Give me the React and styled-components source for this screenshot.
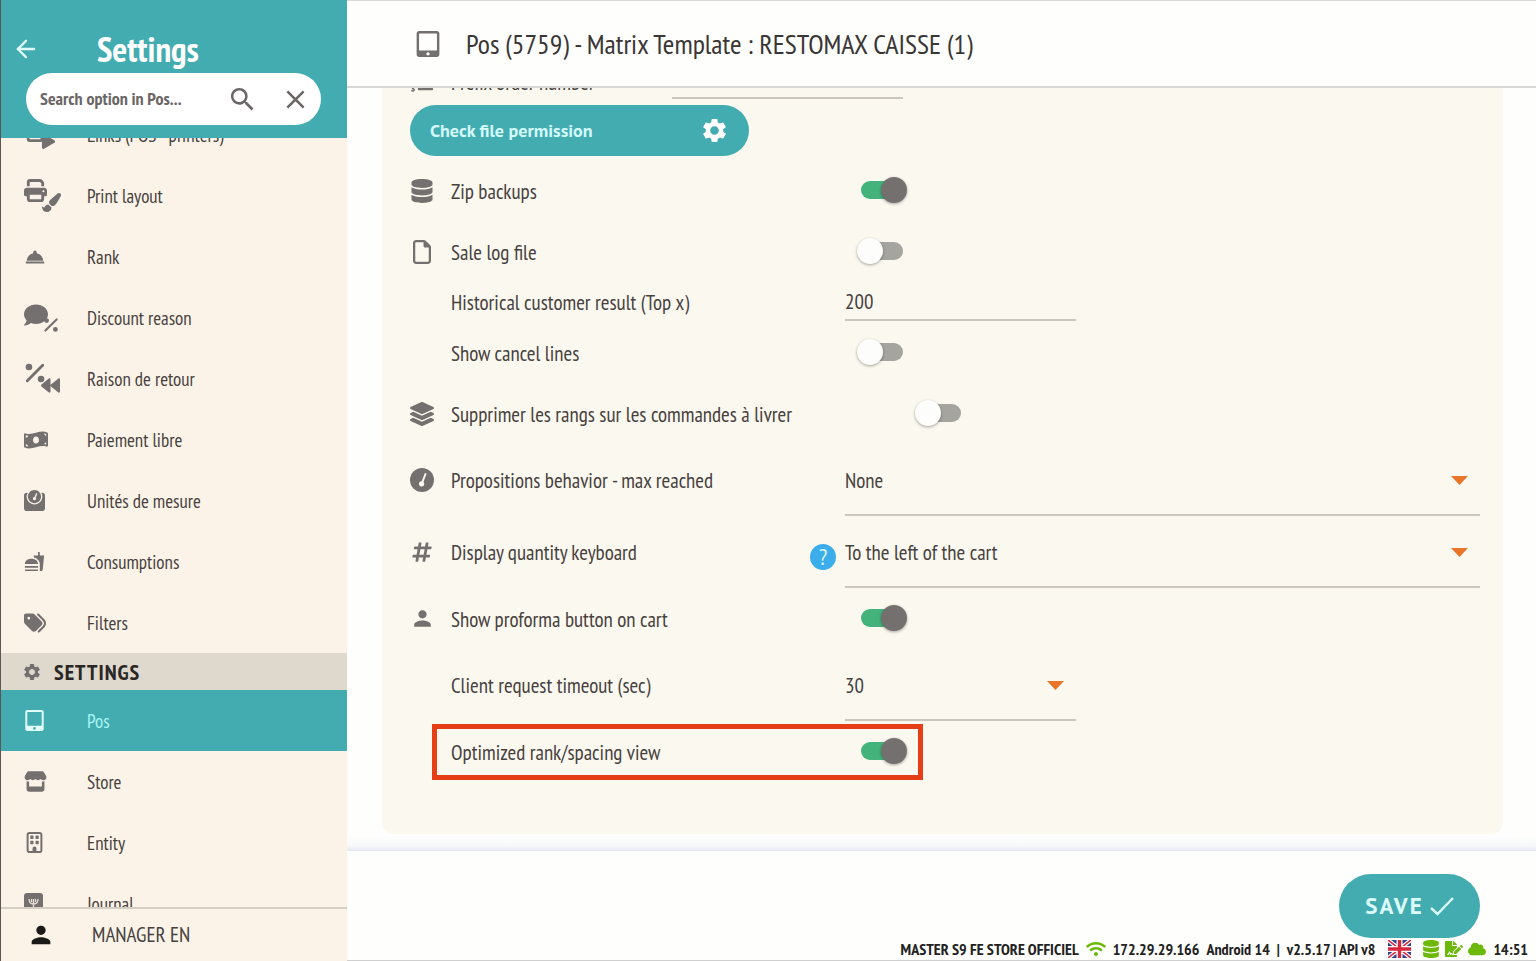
import styled, { createGlobalStyle, css } from 'styled-components'
import { FiArrowLeft } from 'react-icons/fi'
import { MdSearch, MdClose, MdRoomService, MdFastfood, MdSettings, MdPerson } from 'react-icons/md'
import {
	FaBackward,
	FaCloud,
	FaComment,
	FaDatabase,
	FaFileSignature,
	FaHashtag,
	FaLayerGroup,
	FaListOl,
	FaMoneyBillWave,
	FaPaintBrush,
	FaPlay,
	FaTabletAlt,
	FaWeight,
	FaWifi,
} from 'react-icons/fa'
import { FaPrint, FaRegBuilding, FaRegFile, FaStore, FaTags } from 'react-icons/fa6'

const teal = '#43acb0'
const grey = '#757070'
const wideFont = "'PT Sans', 'Open Sans', 'Liberation Sans', sans-serif"

const GlobalStyle = createGlobalStyle`
	*, *::before, *::after {
		box-sizing: border-box;
	}
	body {
		margin: 0;
		background: #fefefd;
		color: #48423f;
		font-family: 'PT Sans Narrow', 'Liberation Sans Narrow', 'Liberation Sans', sans-serif;
		font-size: 21px;
		line-height: 24px;
	}
	button, input, select {
		font: inherit;
		color: inherit;
		border: 0;
		padding: 0;
		margin: 0;
		background: none;
		border-radius: 0;
	}
	button {
		cursor: pointer;
	}
	svg {
		display: block;
		flex: none;
	}
`

const Shell = styled.div`
	display: flex;
	height: 100vh;
	overflow: hidden;
`

/* sidebar */
const Sidebar = styled.aside`
	display: flex;
	flex-direction: column;
	flex: 0 0 347px;
	background: #fbf3e8;
	border-left: 1px solid #5d5753;
`
const SidebarHead = styled.header`
	height: 138px;
	flex: none;
	padding: 31px 26px 0 11px;
	background: ${teal};
	color: #fff;
`
const TitleRow = styled.div`
	display: flex;
	align-items: center;
	gap: 57px;
	height: 36px;
	button {
		color: #dffafa;
	}
	h1 {
		margin: 0;
		font-size: 35px;
		line-height: 36px;
		font-weight: 700;
	}
`
const SearchBox = styled.form`
	display: flex;
	align-items: center;
	height: 52px;
	margin: 6px 0 0 14px;
	padding: 0 10px 0 14px;
	border-radius: 26px;
	background: #fff;
	color: #6b6666;
	input {
		flex: 1;
		min-width: 0;
		font-size: 18px;
		font-weight: 700;
		outline: 0;
	}
	input::placeholder {
		color: #6b6666;
		opacity: 1;
	}
	button + button {
		margin-left: 22px;
	}
`
const Nav = styled.nav`
	flex: 1;
	min-height: 0;
	overflow: hidden;
	ul {
		list-style: none;
		margin: -34px 0 0;
		padding: 0;
	}
`
const NavLink = styled.a`
	display: grid;
	grid-template-columns: 63px 1fr;
	align-items: center;
	height: 61px;
	padding-left: 23px;
	color: #48423f;
	text-decoration: none;
	font-size: 19px;
	svg {
		color: ${grey};
	}
	${({ $active }) =>
		$active &&
		css`
			background: ${teal};
			color: #a5f6f6;
			svg {
				color: #e2fdfd;
			}
		`}
`
const NavSection = styled.h2`
	display: flex;
	align-items: center;
	gap: 12px;
	height: 37px;
	margin: 0;
	padding-left: 21px;
	background: #dfd8cd;
	color: #2a2725;
	font-size: 22px;
	letter-spacing: 1px;
	svg {
		color: ${grey};
	}
`
const IconPair = styled.span`
	display: flex;
	width: 40px;
	svg + svg {
		margin: 14px 0 0 -5px;
	}
`
const UserRow = styled.div`
	display: flex;
	align-items: center;
	gap: 37px;
	flex: none;
	height: 54px;
	padding-left: 26px;
	border-top: 2px solid #d5cec4;
	svg {
		color: #1c1a19;
	}
`

/* main column */
const Main = styled.main`
	display: flex;
	flex-direction: column;
	flex: 1;
	min-width: 0;
	border-top: 1px solid #d9d9d9;
`
const PageHead = styled.header`
	display: flex;
	align-items: center;
	gap: 25px;
	flex: none;
	height: 87px;
	padding-left: 68px;
	border-bottom: 2px solid #d8d8d6;
	svg {
		color: ${grey};
	}
	h2 {
		margin: 0;
		color: #3a3636;
		font-size: 28px;
		line-height: 32px;
		font-weight: 400;
	}
`
const Scroller = styled.div`
	flex: 1;
	min-height: 0;
	overflow: hidden;
	padding: 0 33px 0 35px;
	background: linear-gradient(to top, #e6e8ee 0, #f6f8fb 5px, #fefefd 16px);
`
const Panel = styled.section`
	margin-top: -28px;
	padding: 0 23px 52px 28px;
	border-radius: 12px;
	background: #fbf8ef;
`
const Row = styled.div`
	position: relative;
	display: grid;
	grid-template-columns: 24px ${({ $label }) => $label || 394}px 1fr;
	column-gap: 17px;
	align-items: center;
	height: ${({ $height }) => $height || 61}px;
	> svg {
		justify-self: center;
		color: ${grey};
	}
	label {
		grid-column: 2;
		margin-right: -17px;
		padding-top: 2px;
	}
	${({ $marked }) =>
		$marked &&
		css`
			&::after {
				content: '';
				position: absolute;
				top: 3px;
				left: 22px;
				width: 491px;
				height: 56px;
				border: 5px solid #e63f17;
				pointer-events: none;
			}
		`}
`
const Control = styled.div`
	grid-column: 3;
	position: relative;
	display: flex;
	align-items: center;
	margin-left: -17px;
	height: 100%;
`
const TextField = styled.input`
	align-self: flex-start;
	width: 231px;
	height: 39px;
	padding-top: 2px;
	border-bottom: 2px solid #cbc7c0;
	outline: 0;
`
const SelectWrap = styled.div`
	position: relative;
	width: ${({ $width }) => $width || '100%'};
	select {
		display: block;
		width: 100%;
		height: 72px;
		padding-top: 4px;
		border-bottom: 2px solid #cbc7c0;
		appearance: none;
		outline: 0;
	}
	svg {
		position: absolute;
		top: 32px;
		right: 12px;
		pointer-events: none;
	}
`
const Toggle = styled.input.attrs({ type: 'checkbox' })`
	appearance: none;
	position: relative;
	width: 42px;
	height: 18px;
	margin: 0 0 2px ${({ $indent }) => $indent || 16}px;
	border-radius: 9px;
	background: #a5a49f;
	cursor: pointer;
	&::before {
		content: '';
		position: absolute;
		top: -4px;
		left: -4px;
		width: 26px;
		height: 26px;
		border-radius: 50%;
		background: #fdfefc;
		box-shadow: 0 1px 3px rgba(0, 0, 0, .35);
	}
	&:checked {
		background: #43b37b;
	}
	&:checked::before {
		left: 20px;
		background: ${grey};
	}
`
const Help = styled.button`
	position: absolute;
	top: 28px;
	left: -35px;
	width: 26px;
	height: 26px;
	border-radius: 50%;
	background: #3badea;
	color: #d9f5ff;
	font-size: 24px;
	line-height: 26px;
`
const PermissionButton = styled.button`
	display: flex;
	align-items: center;
	justify-content: space-between;
	width: 339px;
	height: 51px;
	margin: 1px 0 4px;
	padding: 0 20px;
	border-radius: 26px;
	background: ${teal};
	color: #d3fafa;
	font-family: ${wideFont};
	font-size: 18px;
	font-weight: 700;
	svg {
		color: #fff;
	}
`
const Footer = styled.footer`
	display: flex;
	flex-direction: column;
	justify-content: space-between;
	align-items: flex-end;
	flex: none;
	height: 110px;
	padding-top: 23px;
	border-bottom: 1px solid #cfcfcf;
`
const SaveButton = styled.button`
	display: flex;
	align-items: center;
	justify-content: center;
	gap: 6px;
	width: 141px;
	height: 64px;
	margin-right: 56px;
	border-radius: 32px;
	background: ${teal};
	color: #dcfbfb;
	font-family: ${wideFont};
	font-size: 23px;
	font-weight: 700;
	letter-spacing: 2px;
`
const StatusBar = styled.div`
	display: flex;
	align-items: center;
	gap: 7px;
	height: 22px;
	padding-right: 8px;
	color: #222;
	font-size: 16px;
	line-height: 20px;
	font-weight: 700;
	white-space: nowrap;
	svg {
		color: #6cb90c;
	}
`
const StatusIcons = styled.span`
	display: flex;
	align-items: center;
	gap: 5px;
	margin-left: 6px;
	svg:first-child {
		margin-right: 6px;
	}
`

const Percent = ({ size = 20 }) => (
	<svg width={size} height={size} viewBox="0 0 20 20" fill="currentColor" aria-hidden="true">
		<path d="M3 17 17 3" stroke="currentColor" strokeWidth="2.6" strokeLinecap="round" />
		<circle cx="4.5" cy="4.5" r="3" />
		<circle cx="15.5" cy="15.5" r="3" />
	</svg>
)

const Gauge = () => (
	<svg width="24" height="24" viewBox="0 0 24 24" fill="currentColor" aria-hidden="true">
		<circle cx="12" cy="12" r="12" />
		<path d="M15.5 6 12.4 14" stroke="#fbf8ef" strokeWidth="2" strokeLinecap="round" />
		<circle cx="11.6" cy="15.8" r="2.6" fill="#fbf8ef" />
	</svg>
)

const Journal = () => (
	<svg width="19" height="22" viewBox="0 0 19 22" aria-hidden="true">
		<rect width="19" height="22" rx="3" fill="currentColor" />
		<path d="M5 6c0 4 2 5 4.5 5S14 10 14 6M9.5 6v10M7.5 6v3M11.5 6v3" fill="none" stroke="#e8dfd6" strokeWidth="1.3" />
	</svg>
)

const Caret = () => (
	<svg width="17" height="9" viewBox="0 0 17 9" aria-hidden="true">
		<path d="M0 0h17L8.5 9z" fill="#e8752a" />
	</svg>
)

const Check = () => (
	<svg width="24" height="20" viewBox="0 0 24 20" fill="none" stroke="currentColor" strokeWidth="2.4" aria-hidden="true">
		<path d="M1 12l6.5 6L23 2" />
	</svg>
)

const Flag = () => (
	<svg width="23" height="18" viewBox="0 0 23 18" aria-hidden="true">
		<path fill="#34408a" d="M0 0h23v18H0z" />
		<path d="M0 0l23 18M23 0L0 18" stroke="#fff" strokeWidth="4" />
		<path d="M0 0l23 18M23 0L0 18" stroke="#d8283e" strokeWidth="1.5" />
		<path d="M11.5 0v18M0 9h23" stroke="#fff" strokeWidth="6" />
		<path d="M11.5 0v18M0 9h23" stroke="#d8283e" strokeWidth="3.4" />
	</svg>
)

const shopLinks = [
	{ text: 'Links (POS - printers)', icon: <IconPair><FaPrint size={22} /><FaPlay size={15} /></IconPair> },
	{ text: 'Print layout', icon: <IconPair><FaPrint size={23} /><FaPaintBrush size={19} /></IconPair> },
	{ text: 'Rank', icon: <MdRoomService size={22} /> },
	{ text: 'Discount reason', icon: <IconPair><FaComment size={24} /><Percent size={16} /></IconPair> },
	{ text: 'Raison de retour', icon: <IconPair><Percent size={22} /><FaBackward size={19} /></IconPair> },
	{ text: 'Paiement libre', icon: <FaMoneyBillWave size={24} /> },
	{ text: 'Unités de mesure', icon: <FaWeight size={21} /> },
	{ text: 'Consumptions', icon: <MdFastfood size={21} /> },
	{ text: 'Filters', icon: <FaTags size={22} /> },
]

const settingLinks = [
	{ text: 'Pos', icon: <FaTabletAlt size={21} />, active: true },
	{ text: 'Store', icon: <FaStore size={23} /> },
	{ text: 'Entity', icon: <FaRegBuilding size={21} /> },
	{ text: 'Journal', icon: <Journal /> },
]

const NavItem = ({ text, icon, active }) => (
	<li>
		<NavLink href="#" $active={active} aria-current={active ? 'page' : undefined}>
			{icon}
			<span>{text}</span>
		</NavLink>
	</li>
)

const ToggleRow = ({ id, icon, text, on, indent, marked }) => (
	<Row $marked={marked}>
		{icon}
		<label htmlFor={id}>{text}</label>
		<Control>
			<Toggle id={id} defaultChecked={on} $indent={indent} />
		</Control>
	</Row>
)

const SelectRow = ({ id, icon, text, value, width, help }) => (
	<Row $height={72}>
		{icon}
		<label htmlFor={id}>{text}</label>
		<Control>
			{help && <Help type="button">?</Help>}
			<SelectWrap $width={width}>
				<select id={id} defaultValue={value}>
					<option>{value}</option>
				</select>
				<Caret />
			</SelectWrap>
		</Control>
	</Row>
)

const App = () => {
	return (
		<Shell>
			<GlobalStyle />
			<Sidebar>
				<SidebarHead>
					<TitleRow>
						<button type="button" aria-label="Back">
							<FiArrowLeft size={28} />
						</button>
						<h1>Settings</h1>
					</TitleRow>
					<SearchBox>
						<input type="text" placeholder="Search option in Pos..." aria-label="Search option in Pos" />
						<button type="button" aria-label="Search">
							<MdSearch size={31} />
						</button>
						<button type="button" aria-label="Clear">
							<MdClose size={31} />
						</button>
					</SearchBox>
				</SidebarHead>
				<Nav>
					<ul>
						{shopLinks.map((link) => <NavItem key={link.text} {...link} />)}
						<li>
							<NavSection><MdSettings size={20} />SETTINGS</NavSection>
						</li>
						{settingLinks.map((link) => <NavItem key={link.text} {...link} />)}
					</ul>
				</Nav>
				<UserRow>
					<MdPerson size={28} />
					MANAGER EN
				</UserRow>
			</Sidebar>

			<Main>
				<PageHead>
					<FaTabletAlt size={26} />
					<h2>Pos (5759) - Matrix Template : RESTOMAX CAISSE (1)</h2>
				</PageHead>
				<Scroller>
					<Panel>
						<Row $height={44} $label={221}>
							<FaListOl size={22} />
							<label htmlFor="prefix">Prefix order number</label>
							<Control>
								<TextField id="prefix" type="text" />
							</Control>
						</Row>
						<PermissionButton type="button">
							Check file permission
							<MdSettings size={29} />
						</PermissionButton>
						<ToggleRow id="zip" icon={<FaDatabase size={24} />} text="Zip backups" on />
						<ToggleRow id="sale-log" icon={<FaRegFile size={24} />} text="Sale log file" />
						<Row $height={40}>
							<label htmlFor="historical">Historical customer result (Top x)</label>
							<Control>
								<TextField id="historical" type="text" defaultValue="200" />
							</Control>
						</Row>
						<ToggleRow id="cancel" text="Show cancel lines" />
						<ToggleRow
							id="ranks"
							icon={<FaLayerGroup size={24} />}
							text="Supprimer les rangs sur les commandes à livrer"
							indent={74}
						/>
						<SelectRow id="propositions" icon={<Gauge />} text="Propositions behavior - max reached" value="None" />
						<SelectRow
							id="keyboard"
							icon={<FaHashtag size={22} />}
							text="Display quantity keyboard"
							value="To the left of the cart"
							help
						/>
						<ToggleRow id="proforma" icon={<MdPerson size={25} />} text="Show proforma button on cart" on />
						<SelectRow id="timeout" text="Client request timeout (sec)" value="30" width="231px" />
						<ToggleRow id="optimized" text="Optimized rank/spacing view" on marked />
					</Panel>
				</Scroller>
				<Footer>
					<SaveButton type="button">
						SAVE
						<Check />
					</SaveButton>
					<StatusBar>
						<span>MASTER S9 FE STORE OFFICIEL</span>
						<FaWifi size={20} />
						<span>172.29.29.166</span>
						<span>Android 14</span>
						<span>|</span>
						<span>v2.5.17 | API v8</span>
						<StatusIcons>
							<Flag />
							<FaDatabase size={18} />
							<FaFileSignature size={18} />
							<FaCloud size={18} />
						</StatusIcons>
						<time>14:51</time>
					</StatusBar>
				</Footer>
			</Main>
		</Shell>
	)
}

export default App
